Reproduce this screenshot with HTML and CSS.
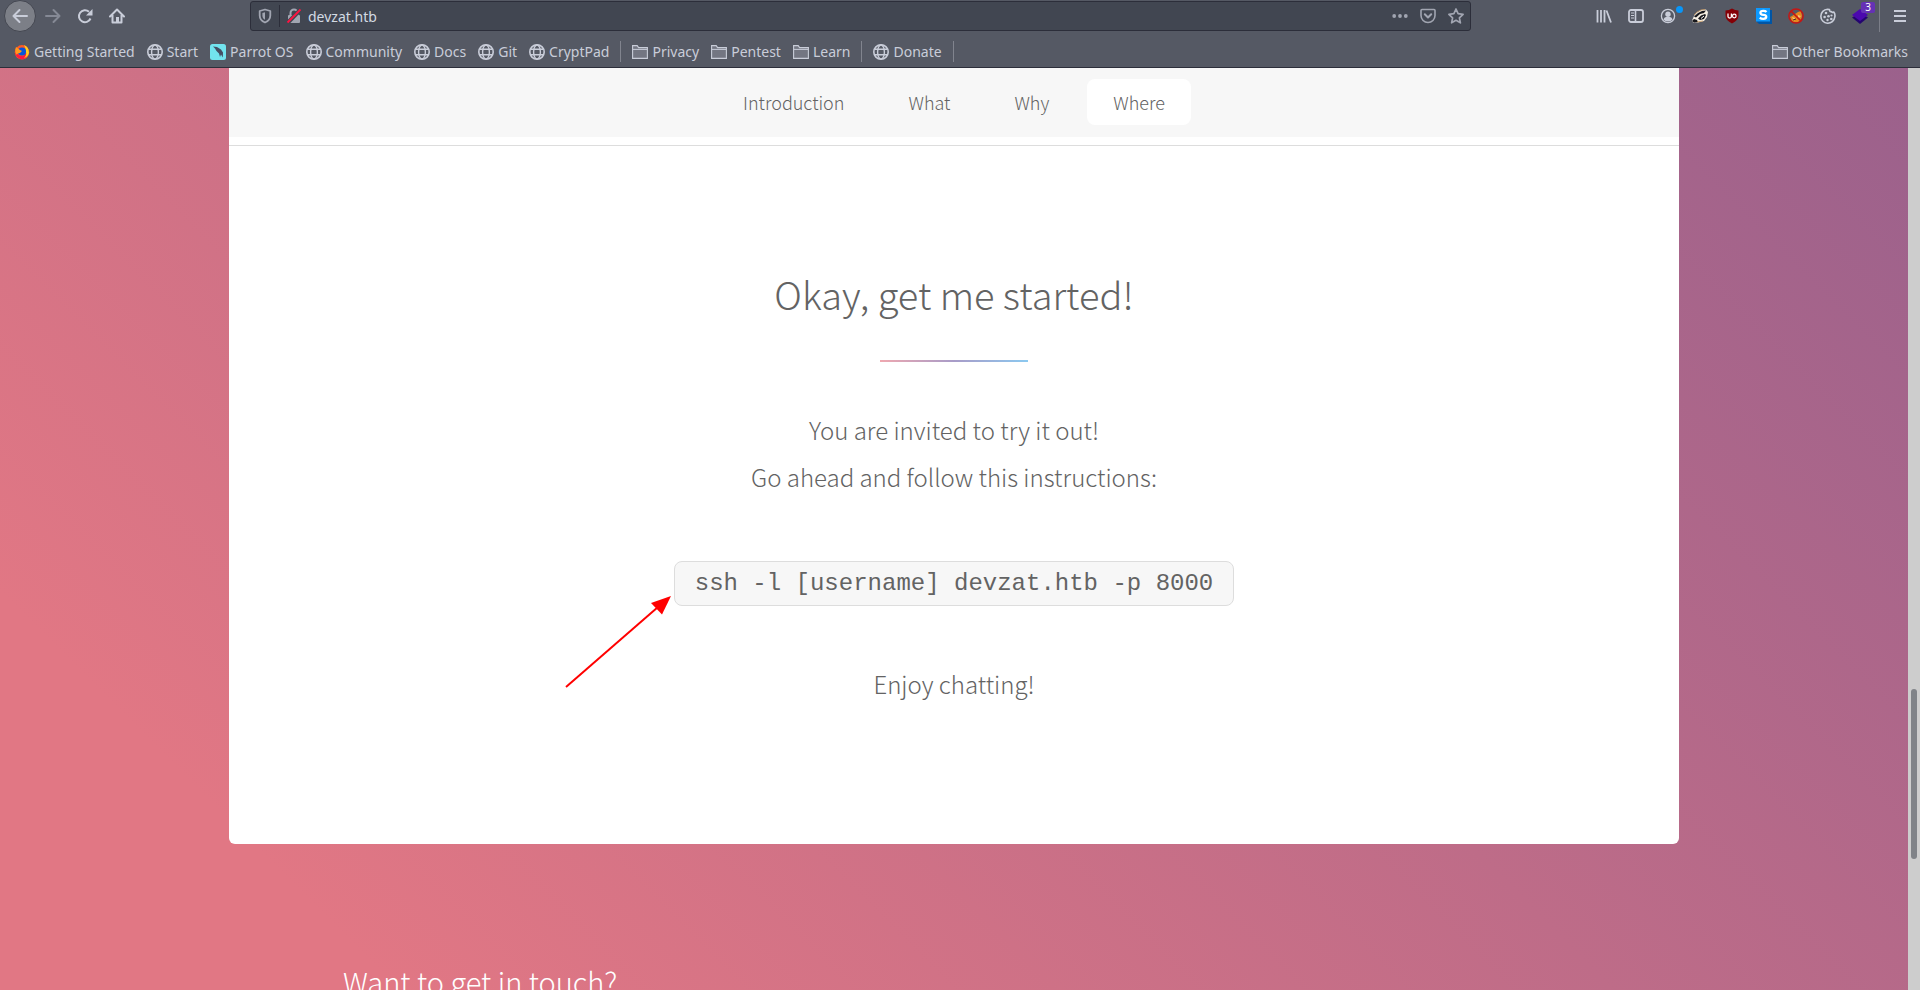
FILE: index.html
```html
<!DOCTYPE html>
<html lang="en">
<head>
<meta charset="utf-8">
<title>devzat.htb</title>
<link rel="stylesheet" href="styles.css">
</head>
<body class="browser">
<svg class="defs" aria-hidden="true">
  <symbol id="globe" viewBox="0 0 16 16"><g fill="none" stroke="currentColor" stroke-width="1.4"><circle cx="8" cy="8" r="7.2" stroke-width="1.6"/><ellipse cx="8" cy="8" rx="3.4" ry="7"/><path d="M2 5.3h12M2 10.7h12"/></g></symbol>
  <symbol id="folder" viewBox="0 0 16 16"><path d="M.6 14V1.6h4.6l1.4 2h8.8V14.400H.6z" fill="#737682" stroke="currentColor" stroke-width="1.1"/><path d="M1 5.400h14" stroke="currentColor"/></symbol>
</svg>
<header class="chrome">
  <div class="toolbar">
    <div class="nav-buttons">
      <button class="tool back" aria-label="Back"><svg viewBox="0 0 16 16"><path d="M15 8H1.500M7.500 2L1.500 8l6 6" fill="none" stroke="currentColor" stroke-width="2" stroke-linecap="round" stroke-linejoin="round"/></svg></button>
      <button class="tool dim" aria-label="Forward"><svg viewBox="0 0 16 16"><path d="M1 8h13.500M8.500 2l6 6-6 6" fill="none" stroke="currentColor" stroke-width="2" stroke-linecap="round" stroke-linejoin="round"/></svg></button>
      <button class="tool" aria-label="Reload"><svg viewBox="0 0 16 16"><path d="M13.500 10.500A6 6 0 1 1 12 3.800" fill="none" stroke="currentColor" stroke-width="2"/><path d="M15.500 1v6.500H9z" fill="currentColor"/></svg></button>
      <button class="tool" aria-label="Home"><svg viewBox="0 0 16 16"><path d="M1 8.500L8 1.500l7 7M3.500 7v7.500h9V7" fill="none" stroke="currentColor" stroke-width="2" stroke-linecap="round" stroke-linejoin="round"/><path d="M7 9h3v6H7z" fill="currentColor"/></svg></button>
    </div>
    <div class="urlbar">
      <button class="url-icon shield" aria-label="Tracking protection"><svg viewBox="0 0 16 16"><path d="M8 1.500L13.300 3v4.500c0 3.500-2 5.700-5.300 7-3.300-1.300-5.300-3.500-5.300-7V3z" fill="none" stroke="currentColor" stroke-width="1.800" stroke-linejoin="round"/><path d="M8 4.300v7.500C6.200 10.800 5.400 9.300 5.400 7.500V5z" fill="currentColor"/></svg></button>
      <button class="url-icon" aria-label="Connection is not secure"><svg viewBox="0 0 16 16"><path d="M4.500 7V5a3.500 3.500 0 0 1 7 0v2" fill="none" stroke="currentColor" stroke-width="2"/><rect x="2" y="7" width="12" height="8" rx="1" fill="currentColor"/><path d="M2 14.500L14.500 1.500" stroke="#414651" stroke-width="4"/><path d="M1.500 14.500L14.500 1.500" stroke="#ff1240" stroke-width="1.800"/></svg></button>
      <input class="address" type="text" value="devzat.htb" aria-label="Address">
      <button class="url-icon" aria-label="Page actions"><svg viewBox="0 0 16 16" fill="currentColor"><circle cx="2.200" cy="8" r="1.900"/><circle cx="8" cy="8" r="1.900"/><circle cx="13.800" cy="8" r="1.900"/></svg></button>
      <button class="url-icon" aria-label="Save to Pocket"><svg viewBox="0 0 16 16" fill="none" stroke="currentColor" stroke-linecap="round" stroke-linejoin="round"><path d="M2 1.500h12q1 0 1 1v5a7 7 0 0 1-14 0v-5q0-1 1-1z" stroke-width="1.600"/><path d="M4.800 6.300L8 9.500l3.200-3.200" stroke-width="2"/></svg></button>
      <button class="url-icon" aria-label="Bookmark this page"><svg viewBox="0 0 16 16"><path d="M8 1l2.100 4.700 5 .6-3.700 3.500 1 5L8 12.300l-4.400 2.500 1-5L.9 6.300l5-.6z" fill="none" stroke="currentColor" stroke-width="1.700" stroke-linejoin="round"/></svg></button>
    </div>
    <div class="extensions">
      <button class="tool" aria-label="Library"><svg viewBox="0 0 16 16" fill="none" stroke="currentColor" stroke-width="1.800"><path d="M1.500 2v12.500M5 2v12.500M8.500 2v12.500M10.500 2.500l4.500 12"/></svg></button>
      <button class="tool" aria-label="Sidebars"><svg viewBox="0 0 16 16" fill="none" stroke="currentColor"><rect x="1" y="2" width="14" height="12" rx="2" stroke-width="1.800"/><path d="M7.500 2v12" stroke-width="1.600"/><path d="M3 5h3M3 7.500h3M3 10h3"/></svg></button>
      <button class="tool" aria-label="Account"><svg viewBox="0 0 16 16"><circle cx="8" cy="8" r="6.600" fill="none" stroke="currentColor" stroke-width="1.300"/><circle cx="8" cy="6.300" r="2.700" fill="currentColor"/><path d="M3.500 11.500Q4 9 6 9h4q2 0 2.500 2.500Q11 13.500 8 13.500t-4.500-2z" fill="currentColor"/></svg><span class="dot"></span></button>
      <button class="tool" aria-label="Privacy Badger"><svg viewBox="0 0 16 16"><path d="M0 12.500L2 8l3-3.500L9 2l5-.5L16 4l-1 5-3 4-6 1.500H1z" fill="#f5eee2"/><path d="M2 8.500L6 5l4-2 4-.5L12 5 8 6l-4 3.500zM6 10.500L9 7.500l4-1.500 1 1-2 4-4 1zM0 13l2-2 3 1 1 2-4 .5z" fill="#17171b"/><path d="M2 7l3-3 4-2 4-.5M5 14l6-1" stroke="#c99a61" fill="none" stroke-width=".8"/><path d="M9 10.500l3-2.500" stroke="#fff"/></svg></button>
      <button class="tool" aria-label="uBlock Origin"><svg viewBox="0 0 16 16"><path d="M8 .5q3 2 6.500 2V7q0 5.500-6.500 8.500Q1.500 12.500 1.500 7V2.500Q5 2.500 8 .5z" fill="#850006"/><path d="M4 5.500v3q0 1.500 1.700 1.500t1.700-1.500v-3" fill="none" stroke="#fff" stroke-width="1.300"/><circle cx="10.300" cy="8" r="1.800" fill="none" stroke="#fff" stroke-width="1.200"/></svg></button>
      <button class="tool" aria-label="Stylus"><svg viewBox="0 0 16 16"><path d="M2 2h14v14H3L0 13z" fill="#0055a5"/><path d="M0 0h14v13.500H0z" fill="#0c99ff"/><path d="M10.500 4Q9.500 2.900 7.300 2.900 4.400 2.900 4.400 4.800t3 2.100 2.900 2-3 1.900Q5 10.800 3.800 9.600" fill="none" stroke="#fff" stroke-width="2.200"/></svg></button>
      <button class="tool" aria-label="Blocker"><svg viewBox="0 0 16 16"><path d="M7 6l3-2 3-1 1 5-1 4-4 2.500-5-1L2 9l2-1z" fill="#e8861c"/><path d="M4 9l3 1-1 3zM10 7l3 1-3 3z" fill="#f6c078"/><path d="M5 12l3-1" stroke="#432b24"/><circle cx="8" cy="8" r="7.100" fill="none" stroke="#c71614" stroke-width="1.500"/><path d="M3 3l10 10" stroke="#c71614" stroke-width="1.700"/></svg></button>
      <button class="tool" aria-label="Cookies"><svg viewBox="0 0 16 16"><path d="M7.500 1.200A7 7 0 1 0 14.800 9q.6-3-1-5-1.600 1-2.500-.5Q9.500 4 9.500 1.500z" fill="none" stroke="currentColor" stroke-width="1.600" stroke-linejoin="round"/><g fill="currentColor"><circle cx="6" cy="5" r="1.300"/><circle cx="4.600" cy="9" r="1.300"/><circle cx="8.500" cy="8.300" r="1.300"/><circle cx="7.500" cy="12" r="1.200"/><circle cx="11.500" cy="7.500" r="1.100"/><circle cx="11.300" cy="11" r="1.300"/></g></svg></button>
      <button class="tool" aria-label="Wappalyzer"><svg viewBox="0 0 16 16"><path d="M0 9.500L8 5l8 4.500-8 6.500z" fill="#24056f"/><path d="M0 7l8-6 8 6-8 6z" fill="#4b08ae"/></svg><span class="badge">3</span></button>
    </div>
    <button class="tool menu" aria-label="Menu"><svg viewBox="0 0 16 16" stroke="currentColor" stroke-width="2"><path d="M2 3h12M2 8h12M2 13h12"/></svg></button>
  </div>
  <nav class="bookmarks" aria-label="Bookmarks">
    <a class="bookmark" href="#"><svg viewBox="0 0 16 16"><circle cx="8" cy="8.300" r="7.200" fill="#ff5a24"/><path d="M2 4Q0 10 3 13t7 2q5-2 5-8-1-3-3-5 1 8-3 10Q3 13 2 4z" fill="#ff183f"/><path d="M10 1q5 2 5 8-1 4-5 5 3-3 2-6 0-4-2-7z" fill="#ffd21d"/><circle cx="8" cy="7.500" r="4" fill="#0755d9"/><path d="M2 3l4 3 2 1-2 2q-3 0-3 2Q0 8 2 3z" fill="#ff9a1c"/></svg>Getting Started</a>
    <a class="bookmark" href="#"><svg><use href="#globe"/></svg>Start</a>
    <a class="bookmark" href="#"><svg viewBox="0 0 16 16"><rect width="16" height="16" rx="2.500" fill="#72e4ee"/><path d="M3 2.500l4 .5 4 2.500 2 3-.2 5L11 10.500 10 13 9 9.500 6.500 7 5 4.500z" fill="#454f63"/></svg>Parrot OS</a>
    <a class="bookmark" href="#"><svg><use href="#globe"/></svg>Community</a>
    <a class="bookmark" href="#"><svg><use href="#globe"/></svg>Docs</a>
    <a class="bookmark" href="#"><svg><use href="#globe"/></svg>Git</a>
    <a class="bookmark" href="#"><svg><use href="#globe"/></svg>CryptPad</a>
    <span class="divider"></span>
    <a class="bookmark" href="#"><svg><use href="#folder"/></svg>Privacy</a>
    <a class="bookmark" href="#"><svg><use href="#folder"/></svg>Pentest</a>
    <a class="bookmark" href="#"><svg><use href="#folder"/></svg>Learn</a>
    <span class="divider"></span>
    <a class="bookmark" href="#"><svg><use href="#globe"/></svg>Donate</a>
    <span class="divider"></span>
    <a class="bookmark other" href="#"><svg><use href="#folder"/></svg>Other Bookmarks</a>
  </nav>
</header>
<div class="viewport">
  <div class="page">
    <main class="card">
      <nav class="sections" aria-label="Sections">
        <a class="section-link" href="#">Introduction</a>
        <a class="section-link" href="#">What</a>
        <a class="section-link" href="#">Why</a>
        <a class="section-link active" href="#">Where</a>
      </nav>
      <section class="start">
        <h2 class="title">Okay, get me started!</h2>
        <p class="lead">You are invited to try it out!<br>Go ahead and follow this instructions:</p>
        <div class="command">
          <code class="code">ssh -l [username] devzat.htb -p 8000</code>
          <svg class="arrow" viewBox="0 0 108 94" aria-hidden="true"><path d="M1 92L93 12" stroke="#f00" stroke-width="2"/><path d="M106 1L97 19.500 86 8z" fill="#f00"/></svg>
        </div>
        <p class="lead">Enjoy chatting!</p>
      </section>
    </main>
    <footer class="footer"><h2 class="contact">Want to get in touch?</h2></footer>
  </div>
  <div class="scrollbar" aria-hidden="true"><div class="thumb"></div></div>
</div>
</body>
</html>
```
FILE: styles.css
```css
* { box-sizing: border-box; }

.browser {
  margin: 0;
  height: 100vh;
  display: flex;
  flex-direction: column;
  overflow: hidden;
  font-family: "Noto Sans", sans-serif;
}

.defs { display: none; }

button {
  border: 0;
  padding: 0;
  background: none;
  color: inherit;
  font: inherit;
}

/* Browser chrome */
.chrome {
  flex: none;
  height: 68px;
  background: #555964;
  border-bottom: 1px solid #2c2e3a;
  color: #c9cdd9;
  font-size: 14px;
}

.toolbar {
  height: 32px;
  display: flex;
  align-items: center;
}

.nav-buttons { display: flex; padding-left: 4px; }

.tool {
  position: relative;
  width: 32px;
  height: 32px;
  display: grid;
  place-items: center;
}

.tool svg, .url-icon svg, .bookmark svg { width: 16px; height: 16px; flex: none; }

.back {
  margin-right: 1px;
  background: #7c7f87;
  border: 1px solid #444751;
  border-radius: 50%;
}

.dim { color: #858995; }

.urlbar {
  flex: 1;
  height: 30px;
  margin: 0 117px;
  padding-left: 4px;
  display: flex;
  align-items: center;
  background: #414651;
  border: 1px solid #2c2e3a;
  border-radius: 3px;
  color: #a1a5b1;
}

.url-icon {
  width: 28px;
  height: 28px;
  display: grid;
  place-items: center;
  flex: none;
}

.url-icon.shield { width: 25px; padding-right: 4px; border-right: 1px solid #2c2e3a; height: 22px; }

.address {
  flex: 1;
  min-width: 0;
  border: 0;
  padding: 0;
  background: none;
  color: #d3dae3;
  font-family: inherit;
  font-size: 14px;
}

.extensions {
  display: flex;
  padding-right: 3px;
  border-right: 1px solid #7b7e88;
}

.dot {
  position: absolute;
  top: 6px;
  right: 1px;
  width: 7px;
  height: 7px;
  border-radius: 50%;
  background: #0996f8;
}

.badge {
  position: absolute;
  top: 2px;
  right: 1px;
  width: 14px;
  border-radius: 2px;
  background: #6531b5;
  color: #fff;
  font-size: 10px;
  line-height: 11px;
}

.menu { width: 40px; }

.bookmarks {
  height: 35px;
  display: flex;
  align-items: center;
  padding: 4px 6px 0 8px;
}

.bookmark {
  display: flex;
  align-items: center;
  gap: 4px;
  padding: 0 6px;
  color: inherit;
  text-decoration: none;
  white-space: nowrap;
}

.divider { width: 1px; height: 21px; margin: 0 5px; background: #81848e; }

.other { margin-left: auto; }

/* Web page */
.viewport {
  flex: 1;
  min-height: 0;
  display: flex;
  font-family: "Noto Sans CJK JP", sans-serif;
  font-weight: 300;
  color: #636363;
}

.page {
  flex: 1;
  overflow: hidden;
  background: linear-gradient(45deg, #e17784 14%, #9b618c 100%);
}

.card {
  width: 76%;
  margin: 0 auto;
  background: #fff;
  border-radius: 0 0 6px 6px;
}

.sections {
  display: flex;
  justify-content: center;
  gap: 12px;
  padding: 11px 0 12px;
  background: #f7f7f7;
}

.section-link {
  padding: 0 26px;
  border-radius: 8px;
  color: inherit;
  font-size: 18px;
  line-height: 46px;
  text-decoration: none;
}

.active { background: #fff; }

.start {
  margin-top: 8px;
  padding: 110px 0 137px;
  border-top: 1px solid #ddd;
  text-align: center;
}

.title {
  margin: 0 0 44px;
  font-size: 38px;
  font-weight: 300;
  line-height: 76px;
}

.title::after {
  content: "";
  display: block;
  width: 148px;
  height: 2px;
  margin: 28px auto 0;
  background: linear-gradient(90deg, #efa8b0, #a89cc8, #8cc9f0);
}

.lead {
  margin: 0;
  font-size: 24px;
  line-height: 47px;
}

.command {
  position: relative;
  width: fit-content;
  margin: 61px auto 54px;
}

.code {
  display: block;
  padding: 0 20px;
  background: #f7f7f7;
  border: 1px solid #ddd;
  border-radius: 8px;
  font-family: "Liberation Mono", monospace;
  font-size: 24px;
  font-weight: 400;
  line-height: 43px;
}

.arrow {
  position: absolute;
  top: 34px;
  right: calc(100% + 1px);
  width: 108px;
  height: 94px;
}

.footer { padding: 109px 0 0 343px; }

.contact {
  margin: 0;
  color: #fff;
  font-size: 29px;
  font-weight: 300;
  line-height: 56px;
}

.scrollbar {
  flex: none;
  width: 12px;
  padding: 0 3px;
  background: #cdcdcd;
  display: flex;
  flex-direction: column;
}

.scrollbar::before { content: ""; flex: 621; }
.scrollbar::after { content: ""; flex: 131; }

.thumb {
  flex: 170;
  border-radius: 3px;
  background: #808388;
}
```
